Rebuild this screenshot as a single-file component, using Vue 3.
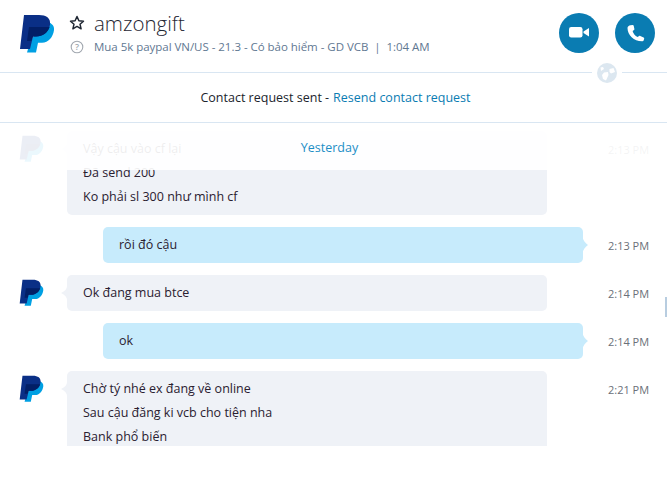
<script setup>
const messages = [
  { id: 1, from: 'them', avatar: true, lines: ['Vậy cậu vào cf lại', 'Đã send 200', 'Ko phải sl 300 như mình cf'], time: '2:13 PM' },
  { id: 2, from: 'me', lines: ['rồi đó cậu'], time: '2:13 PM' },
  { id: 3, from: 'them', avatar: true, lines: ['Ok đang mua btce'], time: '2:14 PM' },
  { id: 4, from: 'me', lines: ['ok'], time: '2:14 PM' },
  { id: 5, from: 'them', avatar: true, lines: ['Chờ tý nhé ex đang về online', 'Sau cậu đăng ki vcb cho tiện nha', 'Bank phổ biến'], time: '2:21 PM' }
]
</script>

<template>
  <div class="app">
    <header class="top">
      <svg class="logo" viewBox="0 0 36 40" width="36" height="40">
        <path fill="#00a0e3" d="M29 8c4 1.500 6.500 4 6 8-1 7.500-5.500 12.500-12 12.800h-4L17 38.500H8L11 28l5-8z" />
        <path fill="#0a2f86" d="M5 1h15c7 0 12 3 11 9.500-1.200 7.500-7 12-14 12h-3L11 35H1z" />
        <path fill="#021f66" d="M10 13h20.600c-2 6-7 9.500-13.600 9.500h-3L12.200 27H8z" />
      </svg>
      <div class="who">
        <div class="name-row">
          <svg class="star" viewBox="0 0 16 16" width="16" height="16">
            <path fill="none" stroke="#1f2733" stroke-width="1.500" stroke-linejoin="round" d="M8 1.500l1.900 4.300 4.600.4-3.500 3 1.100 4.600L8 11.400l-4.100 2.400L5 9.200l-3.500-3 4.600-.4z" />
          </svg>
          <span class="name">amzongift</span>
        </div>
        <div class="status-row">
          <svg class="help" viewBox="0 0 14 14" width="14" height="14">
            <circle cx="7" cy="7" r="5.800" fill="none" stroke="#a2a8b0" stroke-width="1.100" />
            <text x="7" y="10" text-anchor="middle" class="help-mark">?</text>
          </svg>
          <span class="status">Mua 5k paypal VN/US - 21.3 - Có bảo hiểm - GD VCB&nbsp; |&nbsp; 1:04 AM</span>
        </div>
      </div>
      <div class="calls">
        <button class="call">
          <svg viewBox="0 0 24 24" width="24" height="24">
            <rect x="2" y="6" width="13.500" height="10.500" rx="2.200" fill="#fff" />
            <path fill="#fff" d="M16.500 10.500l5.500-3.500v8.500l-5.500-3.500z" />
          </svg>
        </button>
        <button class="call">
          <svg viewBox="0 0 24 24" width="24" height="24">
            <path fill="#fff" d="M7.500 4.200l2.200-.2c.5 0 .9.3 1 .8l.7 3.300c.1.400 0 .8-.4 1l-1.400 1c.6 2.600 2.400 4.800 5 6l1.500-1c.4-.3.8-.3 1.200-.1l3.300 1.500c.5.2.7.6.6 1.100l-.5 1.700c-.2.6-.6 1-1.300 1C11 20.500 4.500 14 4.500 7c0-1.300 1.400-2.700 3-2.800z" />
          </svg>
        </button>
      </div>
      <span class="globe">
        <svg viewBox="0 0 20 20" width="20" height="20">
          <circle cx="10" cy="10" r="10" fill="#dce7f0" />
          <path fill="#fff" d="M3.500 4.500l2.500-.5 1 2-3 2zM7 9.500l4-.5.5 3-2.500 5.500-3-1.500-1-4zM12.500 6l4-1 1.500 4-4 1.500-1.500-1.500z" />
        </svg>
      </span>
    </header>

    <div class="request">
      Contact request sent - <a class="resend">Resend contact request</a>
    </div>

    <div class="conversation">
      <div class="fade">
        <span class="day">Yesterday</span>
      </div>
      <div
        v-for="msg in messages"
        :key="msg.id"
        class="msg"
        :class="msg.from"
      >
        <div class="avatar">
          <svg v-if="msg.avatar" viewBox="0 0 36 40" width="25" height="28">
            <path fill="#00a0e3" d="M29 8c4 1.500 6.500 4 6 8-1 7.500-5.500 12.500-12 12.800h-4L17 38.500H8L11 28l5-8z" />
            <path fill="#0a2f86" d="M5 1h15c7 0 12 3 11 9.500-1.200 7.500-7 12-14 12h-3L11 35H1z" />
            <path fill="#021f66" d="M10 13h20.600c-2 6-7 9.500-13.600 9.500h-3L12.200 27H8z" />
          </svg>
        </div>
        <div class="bubble">
          <p v-for="line in msg.lines" :key="line">{{ line }}</p>
        </div>
        <span class="time">{{ msg.time }}</span>
      </div>
    </div>
    <span class="scroll-mark"></span>
  </div>
</template>

<style>
html, body {
  margin: 0;
  background: #fff;
}
</style>

<style scoped>
.app {
  width: 667px;
  height: 478px;
  overflow: hidden;
  font-family: "Open Sans", "Noto Sans", sans-serif;
  color: #2a2a38;
  position: relative;
}

.top {
  border-bottom: 1px solid #d9e6f2;
  display: flex;
  align-items: flex-start;
  padding: 14px 12px 0 19px;
  height: 58px;
  position: relative;
}

.logo {
  margin-right: 14px;
  flex: none;
}

.who {
  flex: 1;
  min-width: 0;
}

.name-row {
  display: flex;
  align-items: center;
  gap: 9px;
  height: 20px;
  margin-top: -1px;
}

.star {
  flex: none;
}

.name {
  font-weight: 300;
  font-size: 20.500px;
  color: #1f2733;
}

.status-row {
  display: flex;
  align-items: center;
  gap: 10px;
  margin-top: 6px;
  padding-left: 1px;
}

.help-mark {
  font-size: 9px;
  font-weight: 600;
  fill: #a2a8b0;
}

.status {
  font-size: 11.500px;
  letter-spacing: -0.030px;
  color: #5f7892;
  white-space: nowrap;
}

.calls {
  display: flex;
  gap: 16px;
  flex: none;
  margin-top: -1px;
}

.call {
  width: 40px;
  height: 40px;
  border-radius: 50%;
  border: 0;
  padding: 0;
  background: #0a7cb2;
  display: flex;
  align-items: center;
  justify-content: center;
}

.globe {
  position: absolute;
  left: 592px;
  top: 63px;
  width: 30px;
  height: 20px;
  background: #fff;
  display: flex;
  justify-content: center;
}

.request {
  height: 49px;
  border-bottom: 1px solid #d9e6f2;
  display: flex;
  align-items: center;
  justify-content: center;
  gap: 4px;
  padding-left: 4px;
  font-size: 12.500px;
  color: #20242c;
  white-space: nowrap;
}

.resend {
  color: #0a7cb2;
}

.conversation {
  position: relative;
  height: 323px;
  overflow: hidden;
  padding-top: 8px;
  box-sizing: border-box;
  display: flex;
  flex-direction: column;
  gap: 12px;
}

.fade {
  position: absolute;
  left: 0;
  right: 0;
  top: 0;
  height: 47px;
  padding-right: 8px;
  background: rgba(255, 255, 255, 0.92);
  display: flex;
  justify-content: center;
  z-index: 1;
}

.day {
  font-size: 12.500px;
  color: #1c8ec6;
  margin-top: 16px;
  line-height: 18px;
}

.msg {
  display: flex;
  align-items: flex-start;
  flex: none;
}

.avatar {
  width: 67px;
  height: 30px;
  flex: none;
  padding-left: 19px;
  box-sizing: border-box;
  padding-top: 4px;
}

.bubble {
  position: relative;
  width: 448px;
  padding: 6px 16px;
  background: #eff2f7;
  border-radius: 5px;
  font-size: 12.500px;
  line-height: 24px;
  color: #2a2030;
}

.bubble p {
  margin: 0;
  white-space: nowrap;
}

.them .bubble::before {
  content: "";
  position: absolute;
  left: -6px;
  top: 11px;
  width: 6px;
  height: 14px;
  background: #eff2f7;
  clip-path: path("M6 0C6 3 4 5 0 7C4 9 6 11 6 14Z");
}

.me .avatar {
  width: 103px;
}

.me .bubble {
  background: #c7ebfc;
}

.me .bubble::after {
  content: "";
  position: absolute;
  right: -5px;
  top: 9px;
  width: 6px;
  height: 18px;
  background: #c7ebfc;
  clip-path: path("M0 0C1 4 3 7 6 9C3 11 1 14 0 18Z");
}

.time {
  position: absolute;
  left: 608px;
  margin-top: 11px;
  font-size: 11px;
  line-height: 15px;
  color: #6a7078;
  white-space: nowrap;
}

.scroll-mark {
  position: absolute;
  left: 665px;
  top: 297px;
  width: 2px;
  height: 20px;
  background: #b8cde0;
}
</style>
